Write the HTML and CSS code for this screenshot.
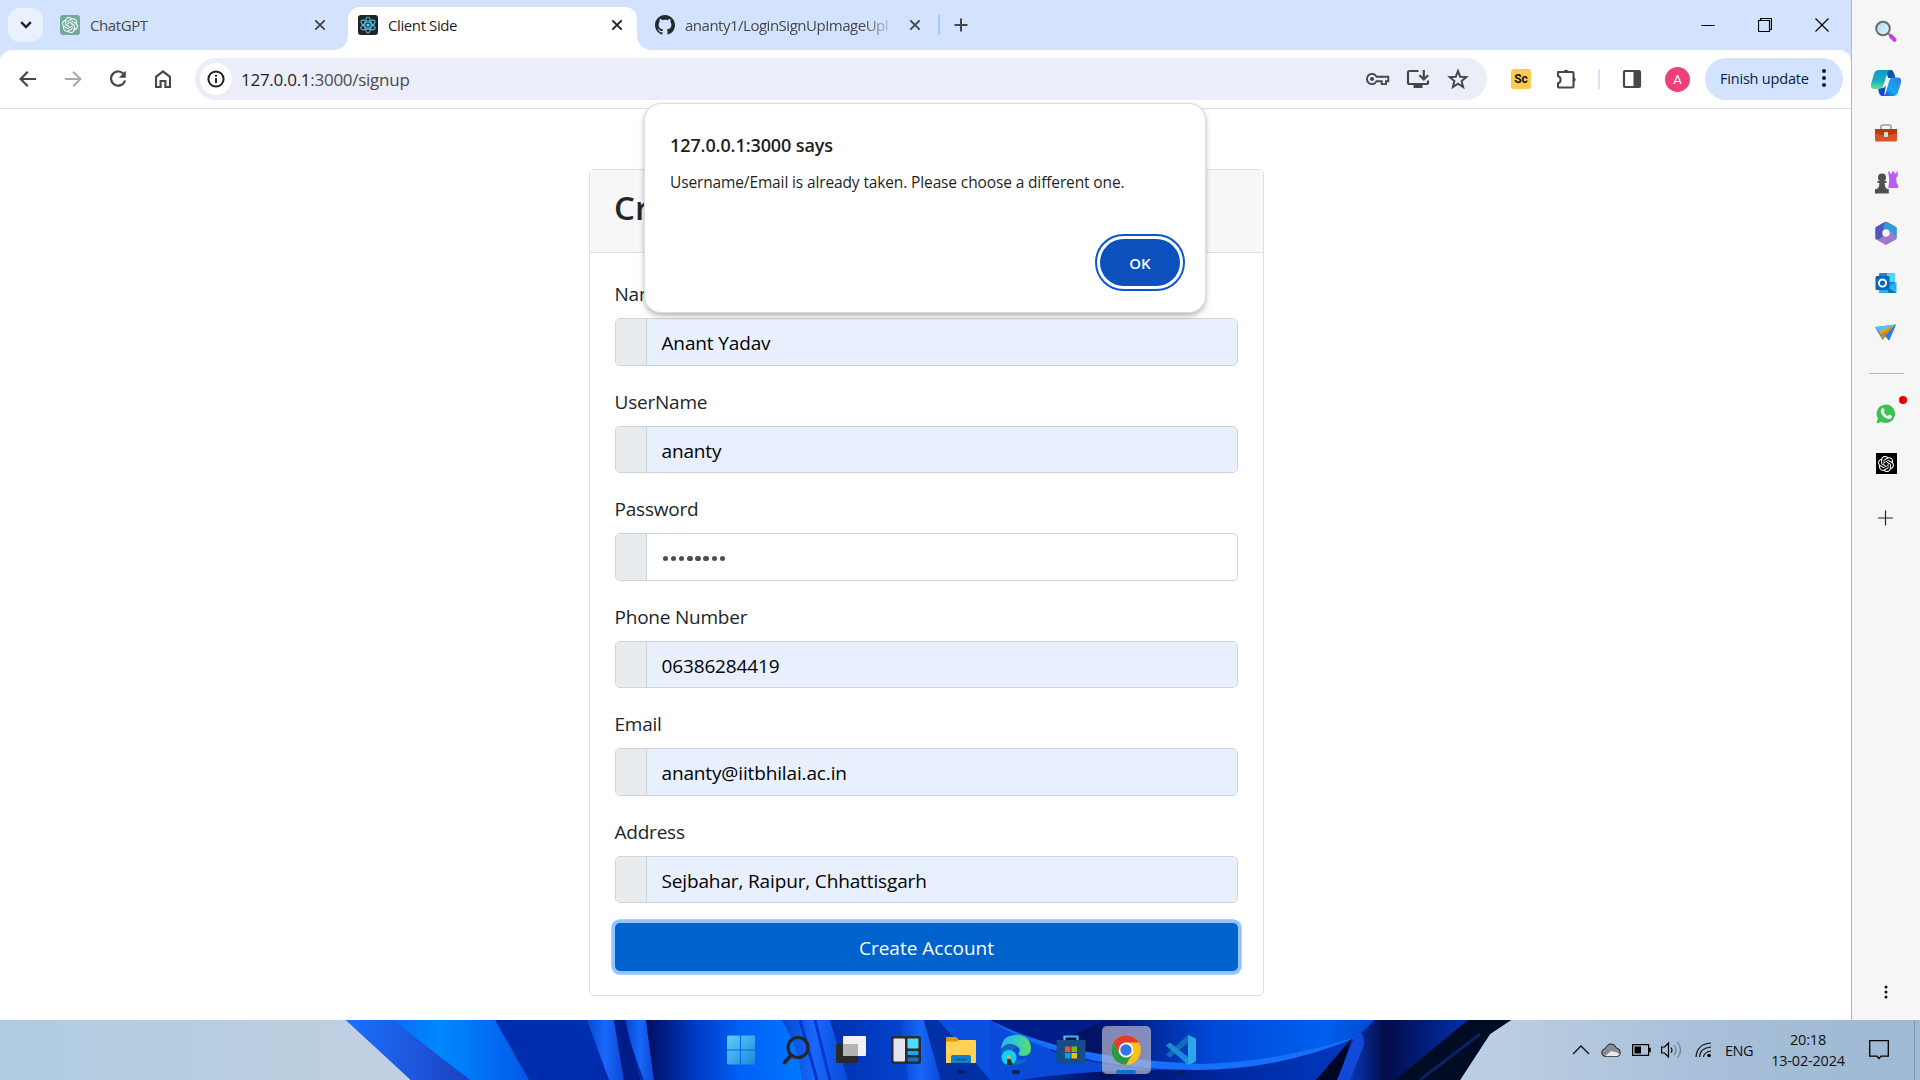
FILE: index.html
```html
<!DOCTYPE html>
<html lang="en">
<head>
<meta charset="utf-8">
<title>Client Side</title>
<link rel="stylesheet" href="styles.css">
</head>
<body>
<svg width="0" height="0" class="defs">
  <defs>
    <symbol id="knot" viewBox="0 0 24 24"><path fill="currentColor" d="M22.2819 9.8211a5.9847 5.9847 0 0 0-.5157-4.9108 6.0462 6.0462 0 0 0-6.5098-2.9A6.0651 6.0651 0 0 0 4.9807 4.1818a5.9847 5.9847 0 0 0-3.9977 2.9 6.0462 6.0462 0 0 0 .7427 7.0966 5.98 5.98 0 0 0 .511 4.9107 6.051 6.051 0 0 0 6.5146 2.9001A5.9847 5.9847 0 0 0 13.2599 24a6.0557 6.0557 0 0 0 5.7718-4.2058 5.9894 5.9894 0 0 0 3.9977-2.9001 6.0557 6.0557 0 0 0-.7475-7.0729zm-9.022 12.6081a4.4755 4.4755 0 0 1-2.8764-1.0408l.1419-.0804 4.7783-2.7582a.7948.7948 0 0 0 .3927-.6813v-6.7369l2.02 1.1686a.071.071 0 0 1 .038.052v5.5826a4.504 4.504 0 0 1-4.4945 4.4944zm-9.6607-4.1254a4.4708 4.4708 0 0 1-.5346-3.0137l.142.0852 4.783 2.7582a.7712.7712 0 0 0 .7806 0l5.8428-3.3685v2.3324a.0804.0804 0 0 1-.0332.0615L9.74 19.9502a4.4992 4.4992 0 0 1-6.1408-1.6464zM2.3408 7.8956a4.485 4.485 0 0 1 2.3655-1.9728V11.6a.7664.7664 0 0 0 .3879.6765l5.8144 3.3543-2.0201 1.1685a.0757.0757 0 0 1-.071 0l-4.8303-2.7865A4.504 4.504 0 0 1 2.3408 7.872zm16.5963 3.8558L13.1038 8.364 15.1192 7.2a.0757.0757 0 0 1 .071 0l4.8303 2.7913a4.4944 4.4944 0 0 1-.6765 8.1042v-5.6772a.79.79 0 0 0-.407-.667zm2.0107-3.0231l-.142-.0852-4.7735-2.7818a.7759.7759 0 0 0-.7854 0L9.409 9.2297V6.8974a.0662.0662 0 0 1 .0284-.0615l4.8303-2.7866a4.4992 4.4992 0 0 1 6.6802 4.66zM8.3065 12.863l-2.02-1.1638a.0804.0804 0 0 1-.038-.0567V6.0742a4.4992 4.4992 0 0 1 7.3757-3.4537l-.142.0805L8.704 5.459a.7948.7948 0 0 0-.3927.6813zm1.0976-2.3654l2.602-1.4998 2.6069 1.4998v2.9994l-2.5974 1.4997-2.6067-1.4997Z"/></symbol>
    <symbol id="cross" viewBox="0 0 12 12"><path d="M1.3 1.3l9.4 9.4M10.7 1.3l-9.4 9.4" stroke="currentColor" stroke-width="1.9" fill="none"/></symbol>
  </defs>
</svg>
<div class="desktop">
  <div class="window">
    <div class="browser">
      <div class="tabstrip">
        <button class="tab-search"><svg width="12" height="8" viewBox="0 0 12 8"><path d="M1.2 1.2L6 6l4.800-4.800" fill="none" stroke="#1f1f1f" stroke-width="2.400"/></svg></button>
        <div class="tab tab-first">
          <span class="fav fav-gpt"><svg width="16" height="16"><use href="#knot"/></svg></span>
          <span class="tab-title t-gpt">ChatGPT</span>
          <svg class="x" width="12" height="12"><use href="#cross"/></svg>
        </div>
        <div class="tab tab-active">
          <span class="fav fav-react"><svg width="18" height="18" viewBox="-9 -9 18 18"><g fill="none" stroke="#53c1de" stroke-width="1.100"><ellipse rx="8" ry="3.200" transform="rotate(30)"/><ellipse rx="8" ry="3.200" transform="rotate(90)"/><ellipse rx="8" ry="3.200" transform="rotate(150)"/></g><circle r="1.600" fill="#61dafb"/></svg></span>
          <span class="tab-title t-client">Client Side</span>
          <svg class="x" width="12" height="12"><use href="#cross"/></svg>
        </div>
        <div class="tab tab-git">
          <svg class="gh" width="20" height="20" viewBox="0 0 16 16"><path fill="#24292f" d="M8 0C3.580 0 0 3.580 0 8c0 3.540 2.290 6.530 5.470 7.590.4.070.55-.17.55-.38 0-.19-.01-.82-.01-1.490-2.010.37-2.530-.49-2.690-.94-.09-.23-.48-.94-.82-1.130-.28-.15-.68-.52-.01-.53.63-.01 1.080.58 1.230.82.720 1.210 1.870.87 2.330.66.070-.52.280-.87.510-1.070-1.780-.2-3.640-.89-3.640-3.950 0-.87.310-1.590.820-2.150-.08-.2-.36-1.020.080-2.120 0 0 .67-.21 2.200.82.640-.18 1.320-.27 2-.27s1.360.09 2 .27c1.530-1.040 2.200-.82 2.200-.82.440 1.100.160 1.920.080 2.120.510.560.820 1.270.820 2.150 0 3.070-1.870 3.750-3.650 3.950.290.250.540.730.540 1.480 0 1.070-.01 1.930-.01 2.200 0 .21.150.46.550.38A8.010 8.010 0 0 0 16 8c0-4.420-3.580-8-8-8z"/></svg>
          <span class="tab-title t-git">ananty1/LoginSignUpImageUpl</span>
          <svg class="x" width="12" height="12"><use href="#cross"/></svg>
        </div>
        <span class="tab-sep"></span>
        <svg class="newtab" width="14" height="14" viewBox="0 0 14 14"><path d="M7 .5v13M.5 7h13" stroke="#444746" stroke-width="2"/></svg>
        <div class="winctl">
          <svg width="14" height="14" viewBox="0 0 14 14"><path d="M.5 7.500h13" stroke="#000"/></svg>
          <svg width="14" height="14" viewBox="0 0 14 14"><path d="M.5 2.500h11v11H.5zM2.500 2.500v-2h11v11h-2" fill="none" stroke="#000" stroke-width="1.200"/></svg>
          <svg width="14" height="14" viewBox="0 0 14 14"><path d="M.5.5l13 13M13.500.5l-13 13" stroke="#000" stroke-width="1.200"/></svg>
        </div>
      </div>
      <div class="toolbar">
        <div class="nav">
          <svg width="24" height="24" viewBox="0 0 24 24"><path d="M20 12H5M11.800 4.800L4.600 12l7.200 7.200" fill="none" stroke="#474747" stroke-width="2.200"/></svg>
          <svg width="24" height="24" viewBox="0 0 24 24"><path d="M4 12h15M12.200 4.800l7.200 7.200-7.200 7.200" fill="none" stroke="#a9a9a9" stroke-width="2"/></svg>
          <svg width="24" height="24" viewBox="0 0 24 24"><path d="M18.200 7.800A7.100 7.100 0 1 0 19 13.500" fill="none" stroke="#474747" stroke-width="2.200"/><path d="M19.800 3.800v7h-7z" fill="#474747"/></svg>
          <svg width="24" height="24" viewBox="0 0 24 24"><path d="M5 20V9.800L12 4.300l7 5.500V20h-4.600v-6H9.600v6z" fill="none" stroke="#474747" stroke-width="2.100"/></svg>
        </div>
        <div class="omnibox">
          <span class="info"><svg width="18" height="18" viewBox="0 0 18 18"><circle cx="9" cy="9" r="7.600" fill="none" stroke="#1f1f1f" stroke-width="2"/><path d="M9 8v5M9 4.700v2" stroke="#1f1f1f" stroke-width="1.900"/></svg></span>
          <span class="url"><b>127.0.0.1</b>:3000/signup</span>
          <div class="omni-icons">
            <svg width="26" height="24" viewBox="0 0 26 24"><path d="M12.600 9.800H24.300V14.200h-2.300v2.900h-4.300v-2.900h-5.100a5.100 5.100 0 1 1 0-4.400z" fill="none" stroke="#474747" stroke-width="1.900"/><circle cx="8" cy="12" r="2.100" fill="#474747"/></svg>
            <svg width="26" height="24" viewBox="0 0 26 24"><path d="M13.500 4H4.500q-1.500 0-1.500 1.500v10q0 1.500 1.500 1.500h17q1.500 0 1.500-1.500v-2" fill="none" stroke="#474747" stroke-width="2.200"/><path d="M8.500 17.500h9V21h-9z" fill="#474747"/><path d="M18.800 3v9M14.500 8.200l4.300 4.300 4.300-4.300" fill="none" stroke="#474747" stroke-width="2.200"/></svg>
            <svg width="24" height="24" viewBox="0 0 24 24"><path d="M12 4l2.200 5.700 6.100.4-4.700 3.900 1.500 6L12 16.700 6.900 20l1.500-6-4.700-3.900 6.100-.4z" fill="none" stroke="#474747" stroke-width="2"/></svg>
          </div>
        </div>
        <div class="exts">
          <span class="sc">Sc</span>
          <svg class="puzzle" width="24" height="24" viewBox="0 0 24 24"><path d="M3 5h14.500q1 0 1 1v13.500q0 1-1 1H4q-1 0-1-1v-3.200q2.600-.6 2.600-3.500T3 9.300z" fill="none" stroke="#474747" stroke-width="2.100" stroke-linejoin="round"/><path d="M8.300 5a2.900 2.900 0 0 1 5.600 0zM18.500 9.800a2.900 2.900 0 0 1 0 5.600z" fill="#474747"/></svg>
          <span class="tb-sep"></span>
          <svg class="panel" width="20" height="20" viewBox="0 0 20 20"><rect x="2" y="2" width="16" height="16" rx="1" fill="none" stroke="#474747" stroke-width="2.200"/><path d="M11.500 2H18v16h-6.500z" fill="#474747"/></svg>
          <span class="avatar">A</span>
          <button class="update"><span>Finish update</span><svg width="4" height="18" viewBox="0 0 4 18"><g fill="#041e49"><circle cx="2" cy="2" r="2"/><circle cx="2" cy="9" r="2"/><circle cx="2" cy="16" r="2"/></g></svg></button>
        </div>
      </div>
      <main class="page">
        <form class="card">
          <header class="card-header"><h3>Create Account</h3></header>
          <div class="card-body">
            <label>Name</label>
            <div class="group"><span class="prefix"></span><span class="field filled">Anant Yadav</span></div>
            <label>UserName</label>
            <div class="group"><span class="prefix"></span><span class="field filled">ananty</span></div>
            <label>Password</label>
            <div class="group"><span class="prefix"></span><span class="field dots"><i></i><i></i><i></i><i></i><i></i><i></i><i></i><i></i></span></div>
            <label>Phone Number</label>
            <div class="group"><span class="prefix"></span><span class="field filled">06386284419</span></div>
            <label>Email</label>
            <div class="group"><span class="prefix"></span><span class="field filled">ananty@iitbhilai.ac.in</span></div>
            <label>Address</label>
            <div class="group"><span class="prefix"></span><span class="field filled">Sejbahar, Raipur, Chhattisgarh</span></div>
            <button type="button" class="submit">Create Account</button>
          </div>
        </form>
      </main>
      <div class="dialog">
        <h2>127.0.0.1:3000 says</h2>
        <p>Username/Email is already taken. Please choose a different one.</p>
        <button class="ok">OK</button>
      </div>
    </div>
    <aside class="side">
      <svg width="30" height="30" viewBox="0 0 30 30"><defs><linearGradient id="mg" x1="0" y1="0" x2="1" y2="1"><stop offset="0" stop-color="#a8dcfa"/><stop offset="1" stop-color="#e4f5ff"/></linearGradient></defs><path d="M17.500 16.500l3 3" stroke="#888" stroke-width="2"/><path d="M19.800 19l3.800 3.800" stroke="#c03df0" stroke-width="4" stroke-linecap="round"/><circle cx="12" cy="11.500" r="6.800" fill="url(#mg)" stroke="#6b6b6b" stroke-width="2"/></svg>
      <svg width="30" height="30" viewBox="0 0 30 30"><defs><linearGradient id="ca" x1="0" y1="0" x2="0" y2="1"><stop offset="0" stop-color="#1495c9"/><stop offset=".6" stop-color="#17b5c0"/><stop offset="1" stop-color="#6de287"/></linearGradient><linearGradient id="cb" x1="1" y1="0" x2="0" y2="1"><stop offset="0" stop-color="#2d7be8"/><stop offset=".6" stop-color="#14a8ef"/><stop offset="1" stop-color="#1449d8"/></linearGradient></defs><path d="M15 2h5q2 0 3 3l1.500 5H17z" fill="#0a55a6"/><path d="M7 20h4q3 0 4-3l-2 11h-2q-2 0-3-3z" fill="#1546c8"/><path d="M8 2h12q-3 0-4 4l-3.500 11q-1 4-5 4H3q-4 0-3-5l3-10q1-4 5-4z" fill="url(#ca)"/><path d="M22 9.500h5q4 0 3 5l-3 9.500q-1 4-5 4H11q3 0 4-4l3-10.500q1-4 4-4z" fill="url(#cb)"/></svg>
      <svg width="30" height="30" viewBox="0 0 30 30"><path d="M10 11V8.500q0-1.500 1.500-1.500h7q1.500 0 1.500 1.500V11" fill="none" stroke="#9b9b9b" stroke-width="1.600"/><rect x="4" y="11" width="22" height="12.500" rx="1.500" fill="#d95425"/><path d="M4 11h22v4.500q-11 3-22 0z" fill="#bb3816"/><rect x="13" y="14" width="4" height="5" rx="1" fill="#ddd"/></svg>
      <svg width="30" height="30" viewBox="0 0 30 30"><path d="M17 3.500h2v2h2v-2h2.500v2h2v-2h1.300v4.800l-1.700 1.200.7 6 1.500 2v2.500h-10l1-8-1.200-9z" fill="#b85cf4"/><g fill="#505050"><circle cx="11" cy="9.500" r="4"/><path d="M6.500 13h9v2h-2q0 4 2.500 6h1.800v4.500H4V21h2q2.500-2 2.500-6h-2z"/></g></svg>
      <svg width="30" height="30" viewBox="0 0 30 30"><path d="M14 4q1-.6 2 0l9 5q.5.3.5 1v10q0 1-.5 1.300l-9 5q-1 .6-2 0l-9-5q-.500-.3-.5-1.300V10q0-.7.5-1z" fill="#4668c8"/><path d="M14 4q1-.6 2 0l9 5q.5.3.5 1v10l-6.500-3v-4L11 10z" fill="#2e9bdd"/><path d="M25.500 20q0 1-.5 1.300l-9 5q-1 .6-2 0l-9-5 6-2.500 9.500-5.500z" fill="#a27acb"/><path d="M14 4L5 9q-.5.300-.5 1v10q0 1 .5 1.300 6 .5 6.500-5v-4.800z" fill="#5456b8"/><circle cx="15" cy="15" r="3.700" fill="#f6f6f6"/></svg>
      <svg width="30" height="30" viewBox="0 0 30 30"><rect x="8" y="5" width="16" height="20" rx="1" fill="#1689d8"/><path d="M16 5h8v9h-8z" fill="#4fd6f5"/><path d="M8 17l8 2 9.500-5v10q0 1-1 1H8z" fill="#2bb0ee"/><path d="M16 19l9.500 6h-8z" fill="#1070b8"/><rect x="4.500" y="8" width="14" height="14" rx="1.500" fill="#0c64b8"/><circle cx="11.500" cy="15" r="3.600" fill="none" stroke="#fff" stroke-width="2"/></svg>
      <svg width="30" height="30" viewBox="0 0 30 30"><path d="M4 9l21-2.500-7 16-3.500-4-3 3.500z" fill="#2d8ae8"/><path d="M4 9l21-2.500-14.500 9z" fill="#50c4f7"/><path d="M25 6.500L8 13.500l2 3.500z" fill="#f0a020"/><path d="M25 6.500L9.500 16l2 6 3-4z" fill="#d58b17"/><path d="M25 6.500L14 17.500l4 5z" fill="#287cf0"/></svg>
      <hr>
      <span class="wa"><svg width="30" height="30" viewBox="0 0 30 30"><path d="M4 26l1.500-6A10.800 10.800 0 1 1 10 24.700z" fill="#fff"/><path d="M5.300 24.500l1.500-5A9.300 9.300 0 1 1 10.500 23z" fill="#3cc251"/><path d="M11 9.500q1-1 1.700.3l.9 2q.2.600-.8 1.500 1.400 2.700 4 3.700 1.300-1.600 1.900-1.200l2 1q.9.500.1 1.800-1.500 2-4 1.200-5.500-1.800-7-6.800-.3-2.200 1.200-3.500z" fill="#fff"/></svg><i></i></span>
      <span class="gpt2"><svg width="16" height="16"><use href="#knot"/></svg></span>
      <svg class="plus" width="16" height="16" viewBox="0 0 16 16"><path d="M7.500.5v15M0 8h15" stroke="#222" stroke-width="1.200"/></svg>
      <svg class="more" width="4" height="14" viewBox="0 0 4 14"><g fill="#111"><circle cx="2" cy="2" r="1.500"/><circle cx="2" cy="7" r="1.500"/><circle cx="2" cy="12" r="1.500"/></g></svg>
    </aside>
  </div>
  <div class="taskbar">
    <svg class="wall" width="1920" height="60" viewBox="0 0 1920 60">
      <defs>
        <linearGradient id="w1"><stop offset="0" stop-color="#1a72ff"/><stop offset="1" stop-color="#1e40c0"/></linearGradient>
        <linearGradient id="w2"><stop offset="0" stop-color="#0a6af5"/><stop offset=".35" stop-color="#0088ff"/><stop offset="1" stop-color="#0058e8"/></linearGradient>
        <linearGradient id="w3"><stop offset="0" stop-color="#010c60"/><stop offset=".3" stop-color="#0038c0"/><stop offset=".6" stop-color="#0060f5"/><stop offset="1" stop-color="#0078ff"/></linearGradient>
        <linearGradient id="w4"><stop offset="0" stop-color="#0448d0"/><stop offset=".5" stop-color="#1868fa"/><stop offset="1" stop-color="#0a48d8"/></linearGradient>
        <linearGradient id="w5"><stop offset="0" stop-color="#0030b0"/><stop offset="1" stop-color="#0444d0"/></linearGradient>
        <linearGradient id="w6"><stop offset="0" stop-color="#0838b8"/><stop offset=".3" stop-color="#020c48"/><stop offset="1" stop-color="#0030b0"/></linearGradient>
        <linearGradient id="w7"><stop offset="0" stop-color="#0030b0"/><stop offset=".25" stop-color="#001060"/><stop offset=".6" stop-color="#0028a0"/><stop offset="1" stop-color="#0038c0"/></linearGradient>
        <linearGradient id="w8"><stop offset="0" stop-color="#010a3c"/><stop offset=".22" stop-color="#001a80"/><stop offset=".5" stop-color="#0048d8"/><stop offset=".85" stop-color="#0060ee"/><stop offset="1" stop-color="#0048d0"/></linearGradient>
      </defs>
      <path d="M346 0H1511L1490 14 1460 60H411z" fill="#002cae"/>
      <path d="M346 0h46L470 60H411z" fill="url(#w1)"/>
      <path d="M392 0H495L529 60H470z" fill="url(#w2)"/>
      <path d="M587 0h27L624 60H609z" fill="url(#w4)"/><path d="M614 0h12L640 60H624z" fill="#001c88"/><path d="M626 0h20l8 60H644Q628 20 626 0z" fill="url(#w4)"/>
      <path d="M646 0H782Q800 30 802 60H654z" fill="url(#w3)"/>
      <path d="M782 0H830L848 60H802Q800 30 782 0z" fill="url(#w4)"/><path d="M800 0l17 60M815 0l15 60" stroke="#0038c8" stroke-width="3"/>
      <path d="M830 0h70l8 60H848z" fill="url(#w5)"/><path d="M900 0h24l17 60H908z" fill="url(#w4)"/>
      <path d="M924 0h66L1060 60H941z" fill="#0030b0"/>
      <path d="M938 0h53l60 27v33h-61z" fill="#0a50e0"/><path d="M924 0h14l52 60h-49z" fill="#0030a4"/>
      <path d="M1020 60q60-12 170-11 90 0 165-32L1325 60z" fill="url(#w7)"/>
      <path d="M990 0H1120L1055 30Q1020 16 990 0z" fill="#001c88"/>
      <path d="M1050 26L1105 0H1374L1362 15Q1280 46 1190 46 1110 46 1050 26z" fill="url(#w8)"/>
      <path d="M990 0q70 38 210 44 80-2 162-29-80 35-165 35-130 0-207-50z" fill="#1770fa"/>
      <path d="M990 0q60 46 180 50-90 0-150 10h-30z" fill="#0a4ad8"/>
      <path d="M1352 18l-36 42h22z" fill="#010622"/><path d="M1356 12q10 0 8 14l-12 34h-15l17-42z" fill="#1149d8"/>
      <path d="M1375 0h93L1395 60H1350l14-35q0-10-3-12z" fill="url(#w6)"/>
      <path d="M1468 0h43L1490 14 1460 60H1395z" fill="#020b24"/><path d="M1480 14L1420 60" stroke="#0a2264" stroke-width="3"/>
    </svg>
    <div class="apps">
      <span><svg width="30" height="30" viewBox="0 0 30 30"><defs><linearGradient id="win" x1="0" y1="0" x2="1" y2="1"><stop offset="0" stop-color="#5fd0fc"/><stop offset="1" stop-color="#1c86d8"/></linearGradient></defs><path d="M2 .5h12v14H1v-13zM15 .5h13q1 0 1 1v13H15zM1 15.500h13v14H2q-1 0-1-1zM15 15.500h14v13q0 1-1 1H15z" fill="url(#win)"/></svg></span>
      <span><svg width="30" height="30" viewBox="0 0 30 30"><circle cx="17" cy="12.500" r="10" fill="none" stroke="#23262c" stroke-width="3.200"/><path d="M10 20.500L3.500 27.500" stroke="#23262c" stroke-width="4" stroke-linecap="round"/></svg></span>
      <span><svg width="30" height="30" viewBox="0 0 30 30"><rect x="0" y="9" width="22" height="19" rx="1" fill="#292929"/><rect x="7" y="1" width="23" height="20" rx="1" fill="#f2f2f2"/><path d="M7 9h15v12H7z" fill="#b4b4b4"/></svg></span>
      <span><svg width="30" height="30" viewBox="0 0 30 30"><rect x="0" y="1" width="30" height="28" rx="2" fill="#2a2d30"/><rect x="2.500" y="3.500" width="11.500" height="23" rx="1" fill="#e4e4ea"/><rect x="16.500" y="3.500" width="11" height="10" rx="1" fill="#4cdcff"/><rect x="16.500" y="16" width="11" height="4" rx="1" fill="#22a4e8"/><rect x="16.500" y="22.500" width="11" height="4" rx="1" fill="#0a74d0"/></svg></span>
      <span class="run"><svg width="30" height="30" viewBox="0 0 30 30"><path d="M0 3q0-1 1-1h9l3 3v4H0z" fill="#e09a00"/><path d="M0 6.500h11l2-1.500h16q1 0 1 1v21q0 1-1 1H0z" fill="#ffd154"/><path d="M5 28v-6q0-2 2-2h16q2 0 2 2v6z" fill="#1080c8"/><path d="M9 24.500h12" stroke="#085a9c" stroke-width="1.500"/></svg></span>
      <span class="run"><svg width="32" height="32" viewBox="0 0 32 32"><defs><linearGradient id="ed"><stop offset="0" stop-color="#27b8ee"/><stop offset=".5" stop-color="#36c8c8"/><stop offset="1" stop-color="#5ce05c"/></linearGradient></defs><path d="M1 15Q2 1 16 1q14 0 15 13 0 8-8 8-6 0-4-3.500 2-3-1-5.500-7-5-17 2z" fill="url(#ed)"/><path d="M1 15q5-6 11-5 5 1 7 5-4-3-6 1-2 9 6 10 5 0 9-2-4 7-12 7Q1 30 1 15z" fill="#1268bc"/><circle cx="9" cy="23.500" r="7.600" fill="#10d2ee"/><path d="M7 31v-5q2-4 4 0l2 5z" fill="#333"/><circle cx="9" cy="23" r="2" fill="#d8a585"/></svg></span>
      <span><svg width="30" height="32" viewBox="0 0 30 32"><path d="M8.500 7V2.500h13V7" fill="none" stroke="#3dbdf0" stroke-width="2.200"/><path d="M.5 6h29v20q0 4-4 4h-21q-4 0-4-4z" fill="#174d86"/><path d="M9 12.500h5.500V18H9z" fill="#f25022"/><path d="M15.500 12.500H21V18h-5.500z" fill="#7fba00"/><path d="M9 19h5.500v5.500H9z" fill="#00a4ef"/><path d="M15.500 19H21v5.500h-5.500z" fill="#ffb900"/></svg></span>
      <span class="current"><svg width="30" height="30" viewBox="-15 -15 30 30"><circle r="14.800" fill="#fbc016"/><path d="M-12.800-7.400A14.800 14.800 0 0 1 12.800-7.400H0L-6.400 3.700z" fill="#e33b2e"/><path d="M-12.800-7.400A14.800 14.800 0 0 0 0 14.800L6.400 3.700-6.400 3.700z" fill="#269a47"/><circle r="7.400" fill="#fff"/><circle r="5.700" fill="#2f76ea"/></svg></span>
      <span class="run"><svg width="30" height="30" viewBox="0 0 30 30"><path d="M22 0l7 3q1 .5 1 2v20q0 1.500-1 2l-7 3z" fill="#2ba6ea"/><path d="M22 0v8L4 22.500 0 19.500z" fill="#0f6db8"/><path d="M22 30v-8L4 7.500 0 10.500z" fill="#1b8dd8"/></svg></span>
    </div>
    <div class="tray">
      <svg class="i-caret" width="18" height="10" viewBox="0 0 18 10"><path d="M1 9l8-8 8 8" fill="none" stroke="#111" stroke-width="1.300"/></svg>
      <svg class="i-cloud" width="20" height="15" viewBox="0 0 20 15"><path d="M4 13.500Q.7 13 .7 9.500.8 6 4.500 5.500 6 1 10 1t5.500 4q3.800.5 3.800 4.500 0 4-3.300 4z" fill="#8a8c8e" stroke="#222"/><path d="M4 13.300L10 8l6 1.500 2.800 2-2.800 1.800z" fill="#e8e8e8"/></svg>
      <svg class="i-bat" width="19" height="12" viewBox="0 0 19 12"><path d="M.6.600h16v10.800H.6z" fill="none" stroke="#000" stroke-width="1.200"/><path d="M2.500 2.500H9v7H2.500zM17 3.800h1.800v4.400H17z"/></svg>
      <svg class="i-vol" width="21" height="18" viewBox="0 0 21 18"><path d="M.6 6h3L7.500 2v14l-3.900-4h-3z" fill="none" stroke="#000" stroke-width="1.200"/><path d="M10 6.500q2 2.500 0 5" fill="none" stroke="#000" stroke-width="1.200"/><path d="M13 4q4 5 0 10M16.500 1q6 8 0 16" fill="none" stroke="#6d7f90" stroke-width="1.200"/></svg>
      <svg class="i-wifi" width="17" height="16" viewBox="0 0 17 16"><g fill="none" stroke="#111" stroke-width="1.200"><path d="M1 15Q2 2 16 1M4.500 15Q5 6 16 5M8.500 15Q9 10 16 9"/></g><circle cx="14" cy="13.500" r="1.800"/></svg>
      <span class="lang">ENG</span>
      <span class="clock"><span>20:18</span><span class="date">13-02-2024</span></span>
      <svg class="i-note" width="20" height="20" viewBox="0 0 20 20"><path d="M.7.700h18.600v15.500H12L10 18.500 8 16.200H.7z" fill="none" stroke="#000" stroke-width="1.300"/></svg>
      <i class="peek"></i>
    </div>
  </div>
</div>
</body>
</html>
```
FILE: styles.css
```css
* { box-sizing: border-box; }
body { margin: 0; font-family: "Open Sans", "Noto Sans", sans-serif; color: #212529; overflow: hidden; }
button { font-family: inherit; border: 0; padding: 0; }
svg { display: block; flex: none; }
.defs { position: absolute; }
.desktop { width: 1920px; height: 1080px; display: flex; flex-direction: column; }
.window { height: 1020px; display: flex; background: #fff; }
.browser { width: 1851px; position: relative; display: flex; flex-direction: column; background: #d3e3fd; }

.tabstrip { height: 50px; display: flex; align-items: center; color: #474747; flex: none; }
.tab-search { width: 35px; height: 34px; border-radius: 12px; background: #e9f0fe; margin-left: 8px; display: grid; place-items: center; }
.tab { display: flex; align-items: center; font-size: 15px; }
.tab-title { flex: 1; margin: 0 10px; white-space: nowrap; letter-spacing: -.4px; }
.tab-first { margin-left: 17px; margin-right: 22px; width: 266px; }
.tab-active { width: 289px; height: 43px; margin-top: 7px; padding: 0 14px 7px 10px; background: #fff; border-radius: 12px 12px 0 0; color: #1f1f1f; position: relative; }
.tab-active::before, .tab-active::after { content: ""; position: absolute; bottom: 0; width: 14px; height: 14px; }
.tab-active::before { left: -14px; background: radial-gradient(circle at 0 0, transparent 13.500px, #fff 14px); }
.tab-active::after { right: -14px; background: radial-gradient(circle at 100% 0, transparent 13.500px, #fff 14px); }
.tab-git { width: 266px; margin-left: 18px; }
.t-git { flex: none; width: 208px; margin-right: 16px; letter-spacing: -.49px; -webkit-mask-image: linear-gradient(90deg, #000 86%, transparent 101%); mask-image: linear-gradient(90deg, #000 86%, transparent 101%); }
.fav { width: 20px; height: 20px; border-radius: 3px; display: grid; place-items: center; }
.fav-gpt { background: #74aa9c; color: #fff; }
.fav-react { background: #20232a; }
.tab-sep { width: 2px; height: 20px; background: #a8c7fa; margin-left: 17px; }
.newtab { margin-left: 14px; }
.winctl { display: flex; gap: 43px; margin-left: auto; margin-right: 22px; }

.toolbar { height: 59px; flex: none; background: #fff; border-radius: 12px 12px 0 0; border-bottom: 1px solid #e0e1e4; display: flex; align-items: center; }
.nav { display: flex; gap: 21px; margin-left: 16px; }
.omnibox { width: 1292px; height: 42px; margin-left: 20px; border-radius: 21px; background: #ebedf8; display: flex; align-items: center; }
.info { width: 32px; height: 32px; border-radius: 50%; background: #fff; margin-left: 5px; display: grid; place-items: center; }
.url { font-size: 17px; color: #4b4b4b; margin-left: 9px; letter-spacing: -.27px; }
.url b { font-weight: 400; color: #1f1f1f; }
.omni-icons { display: flex; gap: 15px; margin-left: auto; margin-right: 17px; }
.exts { display: flex; align-items: center; }
.sc { width: 20px; height: 20px; margin-left: 24px; border-radius: 3px; background: #fbcb4e; color: #111; font: 700 12px/20px Roboto, sans-serif; text-align: center; }
.puzzle { margin-left: 24px; }
.tb-sep { width: 2px; height: 20px; background: #d3e3fd; margin-left: 19px; }
.panel { margin-left: 22px; }
.avatar { width: 25px; height: 25px; border-radius: 50%; background: #ec407a; color: #fff; font: 400 13px/25px Roboto, sans-serif; text-align: center; margin-left: 23px; }
.update { width: 138px; height: 42px; margin-left: 15px; border-radius: 21px; background: #d3e3fd; color: #041e49; font-size: 14.500px; display: flex; align-items: center; justify-content: space-between; padding: 0 17px 2px 15px; letter-spacing: -.2px; white-space: nowrap; }

.page { flex: 1; background: #fff; display: flex; justify-content: center; padding-top: 60px; align-items: flex-start; padding-left: 2px; }
.card { width: 675px; height: 827px; border: 1px solid #dfdfdf; border-radius: 5px; font-size: 19px; line-height: 30px; }
.card-header { height: 83px; background: #f7f7f7; border-bottom: 1px solid #dfdfdf; padding: 15px 24px; }
.card-header h3 { margin: 0; font-size: 33px; line-height: 45px; font-weight: 600; }
.card-body { padding: 25px; display: flex; flex-direction: column; }
.card label { height: 30px; margin: 0 0 10px -.5px; line-height: 33px; letter-spacing: -.22px; }
.group { height: 47.500px; margin-bottom: 20px; display: flex; border: 1px solid #ced4da; border-radius: 5px; overflow: hidden; }
.prefix { width: 30.500px; background: #e9ecef; border-right: 1px solid #ced4da; }
.field { flex: 1; padding-left: 15px; line-height: 48px; color: #000; letter-spacing: -.14px; }
.filled { background: #e8f0fe; }
.dots { display: flex; align-items: center; gap: 2.700px; padding-top: 3px; padding-left: 16px; }
.dots i { width: 5.500px; height: 5.500px; border-radius: 50%; background: #495057; }
.submit { height: 47.500px; border-radius: 5px; background: #0062cc; box-shadow: 0 0 0 3.750px #92c5ff; color: #fff; font-size: 19px; padding-top: 2px; }

.dialog { position: absolute; left: 645px; top: 104px; width: 560px; height: 208px; padding: 25px; background: #fff; border-radius: 16px; box-shadow: 0 0 0 1px #dcdede, 0 3px 6px rgba(0,0,0,.35); color: #1f1f1f; display: flex; flex-direction: column; }
.dialog h2 { margin: 2px 0 0; font-size: 18px; line-height: 28px; font-weight: 600; letter-spacing: -.1px; }
.dialog p { margin: 11px 0 0; font-size: 15.500px; line-height: 24px; letter-spacing: -.13px; white-space: nowrap; }
.ok { width: 80px; height: 47px; margin: 45px 0 0 auto; border-radius: 23.500px; background: #0b50bd; color: #fff; font-size: 15px; font-weight: 600; outline: 2.500px solid #0b57d0; outline-offset: 3px; }

.side { width: 69px; border-left: 1px solid #b9b9b9; background: #f6f6f6; display: flex; flex-direction: column; align-items: center; padding-top: 17px; gap: 20px; }
.side > svg:nth-child(2) { margin-top: 1px; }
.side > svg { height: 30px; }
.side hr { width: 35px; height: 1px; border: 0; background: #b5b5b5; margin: 5px 0 4px; }
.wa { position: relative; margin-top: 1px; }
.wa i { position: absolute; left: 28px; top: -3px; width: 8px; height: 8px; border-radius: 50%; background: #e00000; }
.gpt2 { width: 21px; height: 21px; background: #000; color: #fff; display: grid; place-items: center; margin-top: 4px; }
.side > .plus { margin-top: 16px; height: 16px; }
.side > .more { margin-top: auto; margin-bottom: 21px; height: 14px; }

.taskbar { height: 60px; position: relative; display: grid; grid-template-columns: 1fr 495px 1fr; align-items: center; background: linear-gradient(90deg, #b0cce2, #bfd0e1 20%, #bccfe2 78%, #a8c0da 88%, #9fb9d2); color: #111; }
.wall { position: absolute; inset: 0; }
.apps { grid-column: 2; position: relative; left: 1px; display: flex; }
.apps span { position: relative; width: 49px; height: 48px; margin: 0 3px; border-radius: 5px; display: grid; place-items: center; }
.apps .current { background: rgba(185,185,205,.7); }
.apps .run::after, .apps .current::after { content: ""; position: absolute; bottom: 0; left: 20.500px; width: 8px; height: 4px; border-radius: 2px; background: #0a1d5c; }
.apps .current::after { left: 14px; width: 20px; background: #0078d4; }
.tray { position: relative; display: flex; align-items: center; justify-content: flex-end; font-size: 14.500px; height: 60px; }
.i-cloud { margin-left: 11px; }
.i-bat { margin-left: 11px; }
.i-vol { margin-left: 10px; }
.i-wifi { margin-left: 13px; }
.lang { margin-left: 13px; width: 28px; letter-spacing: -.5px; }
.clock { width: 76px; margin-left: 17px; display: flex; flex-direction: column; align-items: center; line-height: 21px; white-space: nowrap; }
.clock span { letter-spacing: -.2px; }
.i-note { margin-left: 23px; }
.peek { width: 1px; height: 60px; background: #7f97ad; margin-left: 25px; margin-right: 5px; }
```
